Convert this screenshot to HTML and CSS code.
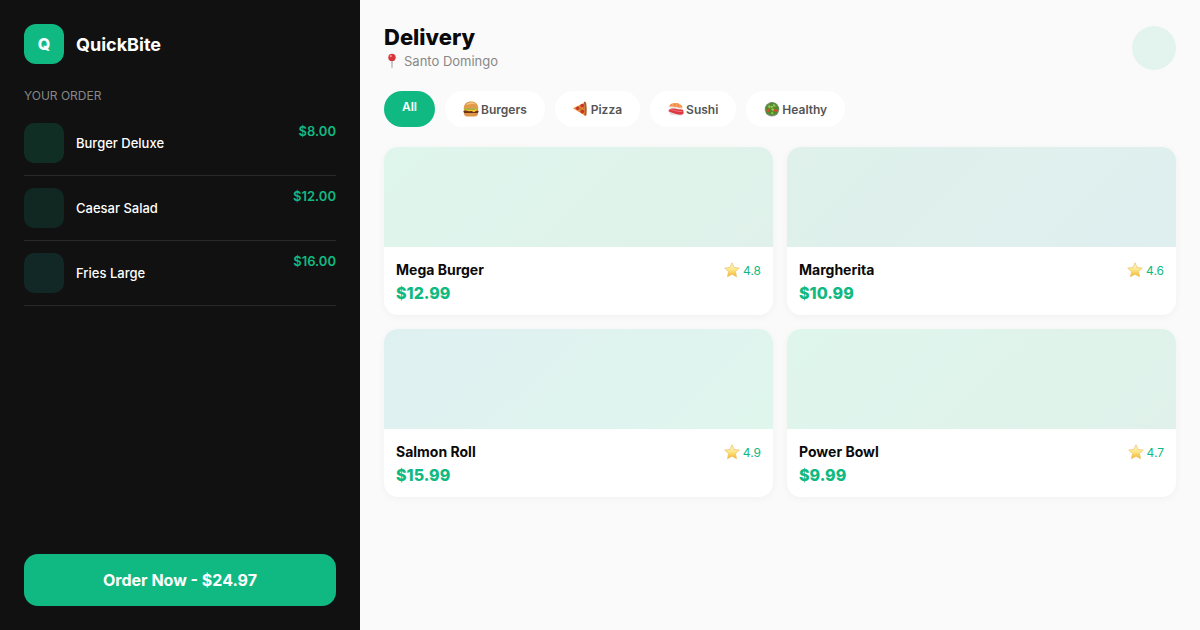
FILE: index.html
```html
<!DOCTYPE html>
<html lang="en">
<head>
    <meta charset="UTF-8">
    <meta name="viewport" content="width=device-width, initial-scale=1.0">
    <title>QuickBite - Delivery</title>
    <link rel="stylesheet" href="styles.css">
</head>
<body>

<!-- Shared star icon -->
<svg class="defs" width="0" height="0" aria-hidden="true">
    <defs>
        <linearGradient id="starFill" x1="0" y1="0" x2="0" y2="1">
            <stop offset="0" stop-color="#fff6cc"/>
            <stop offset="0.5" stop-color="#fce68a"/>
            <stop offset="1" stop-color="#f6b424"/>
        </linearGradient>
        <symbol id="star" viewBox="0 0 16 16">
            <path d="M8 .8l2.100 4.700 5.200.6-3.800 3.500 1 5.100L8 12.200l-4.500 2.500 1-5.100L.7 6.100l5.200-.6z" fill="url(#starFill)" stroke="#ecc066" stroke-width=".7" stroke-linejoin="round"/>
        </symbol>
    </defs>
</svg>

<div class="app">
    <!-- Order sidebar -->
    <aside class="sidebar">
        <div class="brand">
            <div class="brand-logo">Q</div>
            <span class="brand-name">QuickBite</span>
        </div>

        <h2 class="order-title">YOUR ORDER</h2>
        <ul class="order-list">
            <li class="order-item">
                <div class="order-thumb thumb-burger"></div>
                <span class="order-name">Burger Deluxe</span>
                <span class="order-price">$8.00</span>
            </li>
            <li class="order-item">
                <div class="order-thumb thumb-salad"></div>
                <span class="order-name">Caesar Salad</span>
                <span class="order-price">$12.00</span>
            </li>
            <li class="order-item">
                <div class="order-thumb thumb-fries"></div>
                <span class="order-name">Fries Large</span>
                <span class="order-price">$16.00</span>
            </li>
        </ul>

        <button type="button" class="order-button">Order Now - $24.97</button>
    </aside>

    <!-- Menu -->
    <main class="main">
        <header class="header">
            <div>
                <h1>Delivery</h1>
                <p class="location">
                    <svg class="icon" viewBox="0 0 16 16" aria-hidden="true">
                        <path d="M7.400 7h1.200l-.2 7.600-.4.9-.4-.9z" fill="#8f979c"/>
                        <circle cx="8" cy="4.400" r="3.700" fill="#d8353a"/>
                        <circle cx="6.800" cy="3.100" r="1.100" fill="#f39a98"/>
                    </svg>
                    Santo Domingo
                </p>
            </div>
            <div class="avatar"></div>
        </header>

        <nav class="filters">
            <button type="button" class="filter active">All</button>
            <button type="button" class="filter">
                <svg class="icon" viewBox="0 0 16 16" aria-hidden="true">
                    <path d="M1 11h14v1.500c0 1.800-1.200 2.900-3 2.900H4c-1.800 0-3-1.100-3-2.900z" fill="#dc964a"/>
                    <rect x=".5" y="9" width="15" height="3" rx="1.500" fill="#6a3019"/>
                    <path d="M.8 7.800h14.400v1.300l-2.200.8-2 1.300-2.300-1.200-3 .3L3 9.500.8 9.200z" fill="#f8c72f"/>
                    <path d="M.7 7.200h14.600l-.5 1.300-2.100-.2-2.200.5-2.400-.4-2.400.4-2.300-.4-2.200.2z" fill="#74a936"/>
                    <path d="M.8 7.400C.8 3 3.600.6 8 .6s7.200 2.400 7.200 6.800z" fill="#e09a48"/>
                    <path d="M3 4C4.200 2.200 6 1.500 8.300 1.500c2 0 3.500.6 4.500 1.900C10 2.800 6.400 2.900 3 4z" fill="#f5c682"/>
                </svg>
                Burgers
            </button>
            <button type="button" class="filter">
                <svg class="icon" viewBox="0 0 16 16" aria-hidden="true">
                    <path d="M0 7.200L11.500 1.800l.7 13z" fill="#e98a32"/>
                    <path d="M10.800.9c1.200-.4 2.200.2 2.400 1.400.6 3.700.7 7.400.3 11-.1 1.500-1.300 1.900-2 1.200.4-4 .3-8.600-.7-13.600z" fill="#b05a28"/>
                    <circle cx="4.700" cy="7.200" r="1.700" fill="#c5382b"/>
                    <circle cx="9.200" cy="4.700" r="1.900" fill="#c5382b"/>
                    <circle cx="9.300" cy="10.500" r="1.900" fill="#c5382b"/>
                    <path d="M6.800 7.600l1 .6M10.500 7.500l.6.8" stroke="#4d7229" stroke-width=".9"/>
                </svg>
                Pizza
            </button>
            <button type="button" class="filter">
                <svg class="icon" viewBox="0 0 16 16" aria-hidden="true">
                    <path d="M2 5.400l12.500.8-.5 2.400-11.400-.6z" fill="#eee9e3"/>
                    <path d="M1 5.600C1.800 2.800 4.600 1.800 7.800 1.900c3.200.1 5.700 1.600 6.900 4.300-1.700 1-3.900.2-6-.2-2.900-.6-5.200-.8-7.700-.4z" fill="#f58b43"/>
                    <path d="M4.500 3l1 2.200M8 2.300l1 3.200M11.300 3.100l1 3" stroke="#fbc190" stroke-width=".7"/>
                    <path d="M1 11l13.800 1.600-.6 2.200-12-1z" fill="#e5dfda"/>
                    <path d="M.4 10.200C.8 7.800 3.300 7 6.300 7.600c2.600.5 5.200 1.100 8 1 1.300.8 1.700 2.600 1.100 4.500-3.200 1.100-6.300.4-9-.6-2.200-.8-4-1.500-6-2.300z" fill="#dc3843"/>
                    <path d="M2.500 8.700c3.500-.2 7 2.400 12 1.800" stroke="#f37e82" stroke-width=".8" fill="none"/>
                </svg>
                Sushi
            </button>
            <button type="button" class="filter">
                <svg class="icon" viewBox="0 0 16 16" aria-hidden="true">
                    <circle cx="8" cy="8.300" r="7.300" fill="#8b938a"/>
                    <path d="M1.500 7l1.300-3 2.500-.8L7 1.200l2.700.7 2.500.9 1 2.200 1.800 2-1 2.800-1 3.200-3.200.7-2.300 1-2.600-1.200-2.700-1L2 10z" fill="#4f8c2e"/>
                    <path d="M3.500 5.500l2-1.500 1.500 1.700-1.500 1.700zM8.500 3l2.500.4.8 2-2.200.7zM7 8l2-1 1.400 1.800-1.800 1.500zM6.600 12l1.800-1.200 1.300 1.700-1.500 1z" fill="#92c24c"/>
                    <circle cx="4.200" cy="9.300" r="1.600" fill="#dc4a2c"/>
                    <circle cx="11.600" cy="9.300" r="1.600" fill="#dc4a2c"/>
                    <circle cx="7.800" cy="5.800" r="1" fill="#b9cf6a"/>
                </svg>
                Healthy
            </button>
        </nav>

        <section class="menu">
            <article class="card">
                <div class="card-image image-burger"></div>
                <div class="card-body">
                    <div class="card-row">
                        <h3>Mega Burger</h3>
                        <span class="rating"><svg class="icon" aria-hidden="true"><use href="#star"/></svg>4.8</span>
                    </div>
                    <p class="price">$12.99</p>
                </div>
            </article>
            <article class="card">
                <div class="card-image image-pizza"></div>
                <div class="card-body">
                    <div class="card-row">
                        <h3>Margherita</h3>
                        <span class="rating"><svg class="icon" aria-hidden="true"><use href="#star"/></svg>4.6</span>
                    </div>
                    <p class="price">$10.99</p>
                </div>
            </article>
            <article class="card">
                <div class="card-image image-salmon"></div>
                <div class="card-body">
                    <div class="card-row">
                        <h3>Salmon Roll</h3>
                        <span class="rating"><svg class="icon" aria-hidden="true"><use href="#star"/></svg>4.9</span>
                    </div>
                    <p class="price">$15.99</p>
                </div>
            </article>
            <article class="card">
                <div class="card-image image-bowl"></div>
                <div class="card-body">
                    <div class="card-row">
                        <h3>Power Bowl</h3>
                        <span class="rating"><svg class="icon" aria-hidden="true"><use href="#star"/></svg>4.7</span>
                    </div>
                    <p class="price">$9.99</p>
                </div>
            </article>
        </section>
    </main>
</div>

</body>
</html>
```
FILE: styles.css
```css
* {
    box-sizing: border-box;
    margin: 0;
    padding: 0;
}
body {
    font-family: Inter, "Liberation Sans", sans-serif;
    background-color: #fafafa;
    color: #0a0a0a;
}
button {
    font-family: inherit;
    border: none;
    cursor: pointer;
}
.defs {
    position: absolute;
}
.icon {
    width: 16px;
    height: 16px;
    flex-shrink: 0;
}
.app {
    display: flex;
    min-height: 100vh;
}

/* Sidebar */
.sidebar {
    width: 360px;
    flex-shrink: 0;
    display: flex;
    flex-direction: column;
    padding: 24px;
    background-color: #111;
    color: white;
}
.brand {
    display: flex;
    align-items: center;
    gap: 12px;
    margin-bottom: 24px;
}
.brand-logo {
    display: flex;
    align-items: center;
    justify-content: center;
    width: 40px;
    height: 40px;
    border-radius: 12px;
    background-color: #10b981;
    font-size: 16px;
    font-weight: 800;
}
.brand-name {
    font-size: 18px;
    font-weight: 700;
}
.order-title {
    margin-bottom: 7px;
    font-size: 12px;
    line-height: 16px;
    font-weight: 400;
    color: #888;
}
.order-list {
    list-style: none;
}
.order-item {
    display: flex;
    gap: 12px;
    padding: 12px 0;
    border-bottom: 1px solid #2a2a2a;
    font-size: 13px;
    line-height: 16px;
}
.order-thumb {
    width: 40px;
    height: 40px;
    border-radius: 10px;
}
.thumb-burger {
    background-color: #112e25;
}
.thumb-salad {
    background-color: #112822;
}
.thumb-fries {
    background-color: #112827;
}
.order-name {
    flex: 1;
    align-self: center;
    font-weight: 500;
}
.order-price {
    font-weight: 600;
    color: #10b981;
}
.order-button {
    margin-top: auto;
    height: 52px;
    border-radius: 14px;
    background-color: #10b981;
    color: white;
    font-size: 16px;
    font-weight: 700;
}

/* Main area */
.main {
    flex: 1;
    padding: 24px;
}
.header {
    display: flex;
    align-items: center;
    justify-content: space-between;
    margin-bottom: 20px;
}
h1 {
    font-size: 22px;
    line-height: 27px;
    font-weight: 800;
}
.location {
    display: flex;
    align-items: center;
    gap: 4px;
    font-size: 13px;
    line-height: 20px;
    color: #888;
}
.avatar {
    width: 44px;
    height: 44px;
    border-radius: 50%;
    background-color: #e3f3ed;
}
.filters {
    display: flex;
    gap: 10px;
    margin-bottom: 20px;
}
.filter {
    display: flex;
    align-items: center;
    gap: 2px;
    height: 36px;
    padding: 0 18px;
    border-radius: 18px;
    background-color: white;
    color: #555;
    font-size: 12px;
    font-weight: 600;
}
.filter.active {
    padding-bottom: 5px;
    background-color: #10b981;
    color: white;
}
.menu {
    display: grid;
    grid-template-columns: 1fr 1fr;
    gap: 14px;
}
.card {
    overflow: hidden;
    border-radius: 14px;
    background-color: white;
    box-shadow: 0 2px 8px rgba(0, 0, 0, 0.04);
}
.card-image {
    height: 100px;
}
.image-burger,
.image-bowl {
    background: linear-gradient(135deg, #dff6ed, #dff1ea);
}
.image-pizza {
    background: linear-gradient(135deg, #dff1ea, #dfeff0);
}
.image-salmon {
    background: linear-gradient(135deg, #dff0f1, #dff6ed);
}
.card-body {
    padding: 12px 12px 10px;
}
.card-row {
    display: flex;
    align-items: center;
    justify-content: space-between;
}
h3 {
    font-size: 14px;
    line-height: 22px;
    font-weight: 700;
}
.rating {
    display: flex;
    align-items: center;
    gap: 3px;
    font-size: 12px;
    color: #10b981;
}
.price {
    font-size: 16px;
    line-height: 24px;
    font-weight: 800;
    color: #10b981;
}
```
